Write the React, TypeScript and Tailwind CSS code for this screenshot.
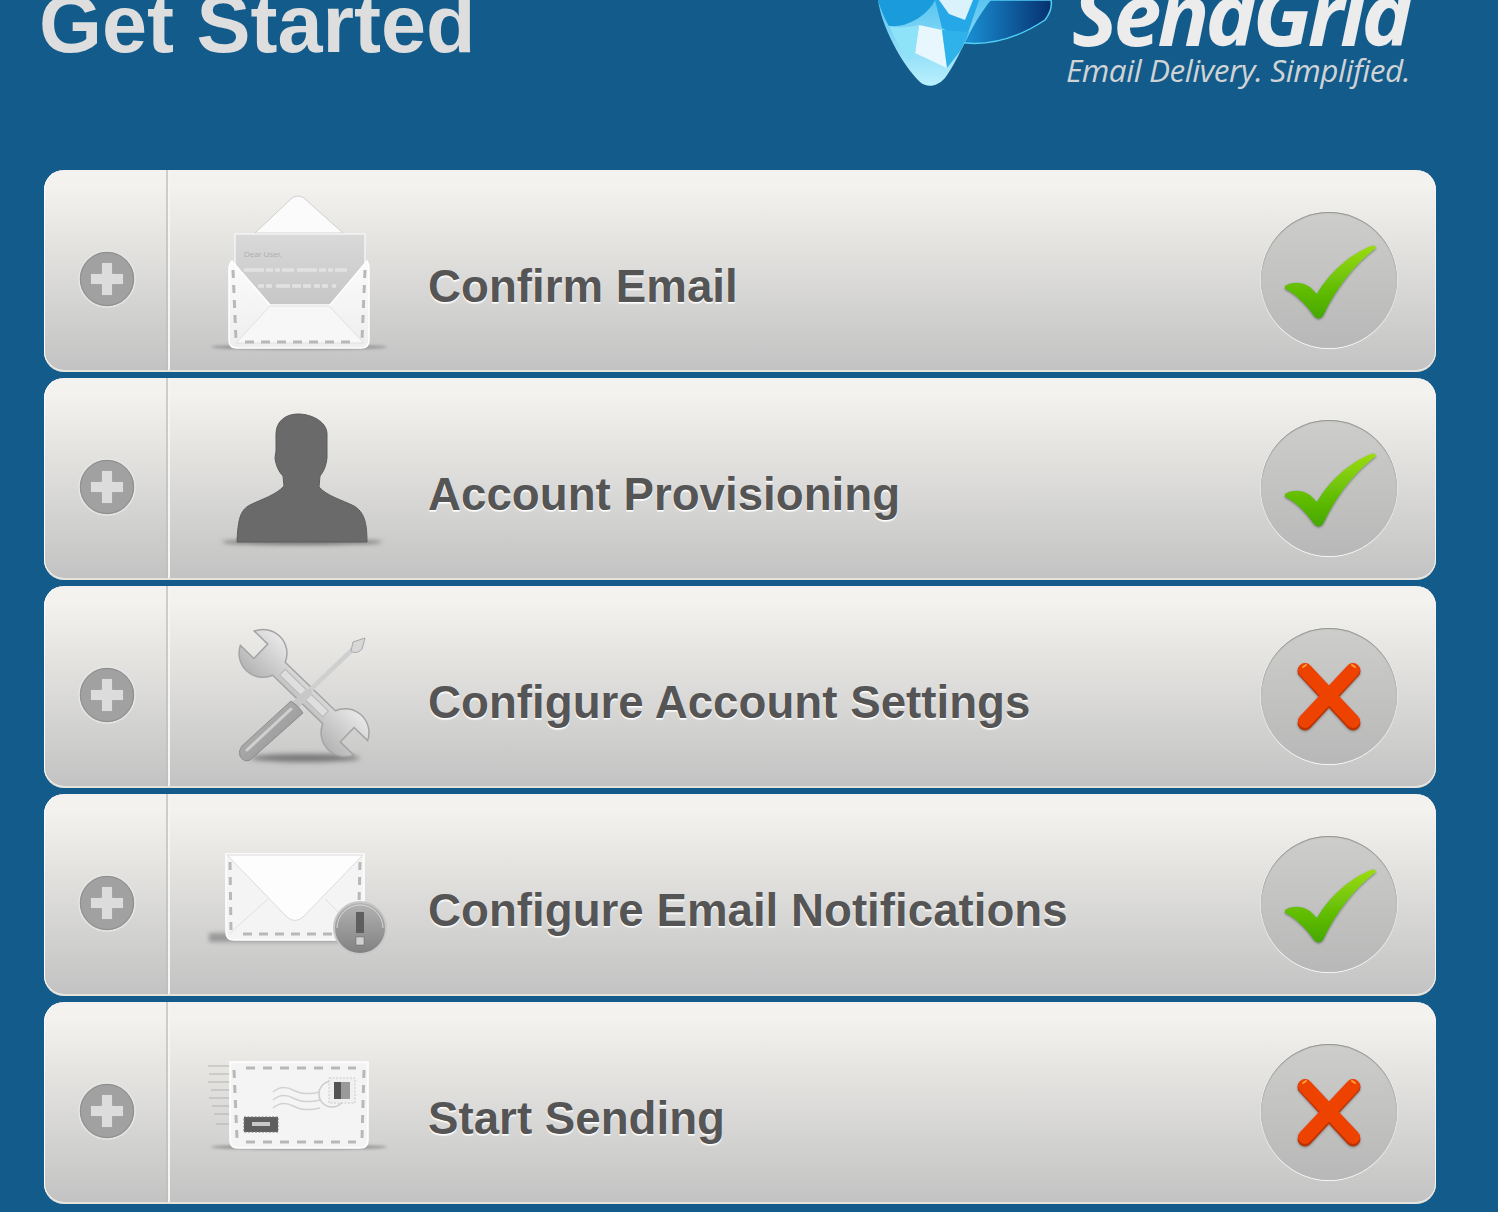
import React from "react";

function Dash({ d }: { d: string }) {
  return <path d={d} fill="none" stroke="#b8b8b8" strokeWidth="3" strokeDasharray="8 7" />;
}

function OpenEnvelope() {
  return (
    <svg viewBox="200 170 200 202" className="w-[200px] h-[202px] shrink-0 ml-[30px]">
      <defs>
        <linearGradient id="a1" x1="0" y1="0" x2="0" y2="1"><stop offset="0" stopColor="#d9d9d9" /><stop offset="1" stopColor="#c6c6c6" /></linearGradient>
        <linearGradient id="a2" x1="0" y1="0" x2="0" y2="1"><stop offset="0" stopColor="#fbfbfb" /><stop offset="1" stopColor="#eeeeee" /></linearGradient>
        <filter id="a3" x="-20%" y="-200%" width="140%" height="500%"><feGaussianBlur stdDeviation="1.5" /></filter>
      </defs>
      <ellipse cx="299" cy="347" rx="88" ry="2.5" fill="#8f8f8f" filter="url(#a3)" />
      <path d="M255 233 L292 198 Q298 194 304 198 L343 233 Z" fill="#fbfbfb" stroke="#d0d0d0" />
      <rect x="235" y="234" width="130" height="72" fill="url(#a1)" stroke="#f4f4f4" strokeWidth="1.5" />
      <text x="244" y="257" fontSize="8" fill="#b0b0b0" fontFamily="'Liberation Sans', sans-serif">Dear User,</text>
      <path d="M244 270 H348" stroke="#e2e2e2" strokeWidth="3.5" strokeDasharray="20 2 7 2 5 2 12 3" />
      <path d="M258 286 H336" stroke="#e2e2e2" strokeWidth="3.5" strokeDasharray="6 2 6 4 14 2 9 2 8 3" />
      <path d="M232 261 L270 305 H330 L367 261 Q369 264 369 268 V340 Q369 348 361 348 H237 Q229 348 229 340 V268 Q229 264 232 261 Z" fill="url(#a2)" stroke="#ffffff" strokeWidth="1.5" />
      <path d="M270 306 H329 L364 343 H236 Z" fill="#f7f7f7" stroke="#e0e0e0" />
      <Dash d="M233 270 L236 340" />
      <Dash d="M365 270 L362 340" />
      <path d="M245 342 L355 342" fill="none" stroke="#b8b8b8" strokeWidth="3" strokeDasharray="9 7" />
    </svg>
  );
}

function Person() {
  return (
    <svg viewBox="200 378 200 202" className="w-[200px] h-[202px] shrink-0 ml-[30px]">
      <defs>
        <filter id="b1" x="-20%" y="-200%" width="140%" height="500%"><feGaussianBlur stdDeviation="2" /></filter>
        <filter id="b2" x="-5%" y="-5%" width="110%" height="110%"><feGaussianBlur stdDeviation="0.5" /></filter>
      </defs>
      <ellipse cx="302" cy="542" rx="80" ry="3" fill="#777" filter="url(#b1)" />
      <path
        d="M298 414 C286 414 276 421 276 434 L276 451 L275 458 C276 466 279 472 283 476 L284 486 C276 495 262 499 250 505 C240 510 238 520 237 542 H367 C367 522 364 512 354 506 C342 500 327 496 319 487 L320 476 C324 471 326 466 327 458 L327 434 C327 422 312 414 298 414 Z"
        fill="#6b6b6b"
        stroke="#5c5c5c"
        filter="url(#b2)"
      />
    </svg>
  );
}

function Tools() {
  return (
    <svg viewBox="200 586 200 202" className="w-[200px] h-[202px] shrink-0 ml-[30px]">
      <defs>
        <linearGradient id="c1" x1="0" y1="0" x2="0" y2="1"><stop offset="0" stopColor="#e8e8e8" /><stop offset="1" stopColor="#b4b4b4" /></linearGradient>
        <linearGradient id="c2" x1="0" y1="0" x2="1" y2="1"><stop offset="0" stopColor="#bdbdbd" /><stop offset="1" stopColor="#8c8c8c" /></linearGradient>
        <filter id="c3" x="-20%" y="-200%" width="140%" height="500%"><feGaussianBlur stdDeviation="2.5" /></filter>
      </defs>
      <ellipse cx="305" cy="758" rx="55" ry="4" fill="#777" filter="url(#c3)" />
      <g transform="translate(304 693) rotate(44)">
        <path
          d="M-34.8 -9 A24 24 0 0 0 -78.8 -10 L-60 -10 L-60 10 L-78.8 10 A24 24 0 0 0 -34.8 9 L34.8 9 A24 24 0 0 0 78.8 10 L60 10 L60 -10 L78.8 -10 A24 24 0 0 0 34.8 -9 Z"
          fill="url(#c1)"
          stroke="#a4a4a4"
          strokeWidth="1.5"
        />
        <rect x="-30" y="-4" width="60" height="8" fill="#dedede" stroke="#b8b8b8" />
      </g>
      <path d="M306 694 L352 650" stroke="#cfcfcf" strokeWidth="4.5" strokeLinecap="round" />
      <path d="M351 651 L353 642 L365 638 L362 649 Q356 655 351 651 Z" fill="#d8d8d8" stroke="#a8a8a8" />
      <path d="M292 708 L308 693" stroke="#c8c8c8" strokeWidth="8" strokeLinecap="round" />
      <path d="M291 701 Q299 706 303 713 L250 760 Q244 763 240 756 Q238 751 242 746 Z" fill="url(#c2)" stroke="#8c8c8c" />
      <path d="M247 750 L291 709" stroke="#d0d0d0" strokeWidth="3" strokeLinecap="round" />
    </svg>
  );
}

function AlertEnvelope() {
  return (
    <svg viewBox="200 794 200 202" className="w-[200px] h-[202px] shrink-0 ml-[30px]">
      <defs>
        <linearGradient id="d1" x1="0" y1="0" x2="0" y2="1"><stop offset="0" stopColor="#b4b4b4" /><stop offset="1" stopColor="#808080" /></linearGradient>
        <filter id="d2" x="-20%" y="-200%" width="140%" height="500%"><feGaussianBlur stdDeviation="2" /></filter>
      </defs>
      <rect x="209" y="933" width="150" height="9" fill="#999" filter="url(#d2)" />
      <path d="M226 854 H364 V932 Q364 940 356 940 H234 Q226 940 226 932 Z" fill="#f4f4f4" stroke="#fff" strokeWidth="1.5" />
      <path d="M229 934 L268 899 M360 934 L325 899" stroke="#e0e0e0" strokeWidth="1" />
      <path d="M227 855 H363 L303 917 Q295 924 287 917 Z" fill="#fdfdfd" stroke="#dadada" />
      <Dash d="M230 862 L231 932" />
      <Dash d="M360 862 L359 905" />
      <path d="M243 934 H340" fill="none" stroke="#b8b8b8" strokeWidth="3" strokeDasharray="9 7" />
      <circle cx="360" cy="928" r="26" fill="url(#d1)" stroke="#c8c8c8" strokeWidth="2" />
      <path d="M337 928 A23 23 0 0 1 383 928" fill="none" stroke="#d8d8d8" strokeWidth="1" />
      <rect x="356" y="912" width="8" height="21" fill="#5f5f5f" />
      <rect x="356" y="937" width="8" height="8" fill="#d0d0d0" stroke="#666" strokeWidth="0.5" />
    </svg>
  );
}

function SendEnvelope() {
  return (
    <svg viewBox="200 1002 200 202" className="w-[200px] h-[202px] shrink-0 ml-[30px]">
      <defs>
        <filter id="e1" x="-20%" y="-200%" width="140%" height="500%"><feGaussianBlur stdDeviation="1.5" /></filter>
      </defs>
      <ellipse cx="299" cy="1147" rx="88" ry="2.5" fill="#8f8f8f" filter="url(#e1)" />
      <path d="M208 1066 H230 M209 1074 H230 M208 1082 H230 M211 1090 H230 M209 1098 H230 M212 1106 H230 M214 1114 H230 M216 1124 H230" stroke="#a8a8a8" strokeOpacity="0.4" strokeWidth="2" />
      <path d="M230 1062 H368 V1140 Q368 1148 360 1148 H238 Q230 1148 230 1140 Z" fill="#f4f4f4" stroke="#fff" strokeWidth="1.5" />
      <path d="M246 1068 H356 M246 1142 H356" fill="none" stroke="#b8b8b8" strokeWidth="3" strokeDasharray="9 8" />
      <Dash d="M234 1070 L237 1138" />
      <Dash d="M364 1070 L362 1138" />
      <path d="M273 1092 Q282 1084 293 1090 T320 1092 M273 1100 Q282 1092 293 1098 T320 1100 M273 1108 Q282 1100 293 1106 T320 1108" fill="none" stroke="#d2d2d2" strokeWidth="1.5" />
      <circle cx="332" cy="1094" r="13" fill="none" stroke="#cccccc" strokeWidth="1.5" />
      <rect x="329" y="1078" width="26" height="25" fill="#f0f0f0" stroke="#c8c8c8" strokeDasharray="2 1.5" />
      <rect x="334" y="1082" width="16" height="17" fill="#9a9a9a" />
      <rect x="334" y="1082" width="7" height="17" fill="#555" />
      <rect x="244" y="1117" width="34" height="15" fill="#5e5e5e" stroke="#777" strokeDasharray="2 1.5" />
      <rect x="252" y="1122" width="18" height="4" fill="#c8c8c8" />
    </svg>
  );
}

function Plus() {
  return (
    <svg viewBox="0 0 58 58" className="w-[58px] h-[58px]">
      <circle cx="29" cy="29" r="28" fill="#a1a1a1" stroke="#e6e6e6" strokeWidth="1.5" />
      <circle cx="29" cy="29" r="26.5" fill="none" stroke="#8f8f8f" strokeWidth="1" />
      <path d="M23.5 12.5 H34.5 V23.5 H45.5 V34.5 H34.5 V45.5 H23.5 V34.5 H12.5 V23.5 H23.5 Z" fill="#dcdcdc" stroke="#8a8a8a" strokeWidth="0.5" strokeLinejoin="round" />
    </svg>
  );
}

function Check() {
  return (
    <svg viewBox="1261 212 136 136" className="w-[136px] h-[136px]">
      <defs>
        <linearGradient id="f1" x1="0" y1="0" x2="0" y2="1"><stop offset="0" stopColor="#9cdc10" /><stop offset="0.6" stopColor="#62bd05" /><stop offset="1" stopColor="#46a800" /></linearGradient>
        <filter id="f2" x="-20%" y="-20%" width="140%" height="140%"><feDropShadow dx="0" dy="1" stdDeviation="1.2" floodColor="#555" floodOpacity="0.7" /></filter>
      </defs>
      <path
        d="M1285 286 C1292 281 1303 282 1310 287 L1317 294 C1326 278 1347 254 1374 245 L1376 248 C1355 264 1337 287 1324 314 C1322 319 1317 320 1314 316 C1305 303 1294 293 1285 289 Z"
        fill="url(#f1)"
        filter="url(#f2)"
      />
    </svg>
  );
}

function Cross() {
  return (
    <svg viewBox="1261 628 136 136" className="w-[136px] h-[136px]">
      <defs>
        <filter id="g2" x="-20%" y="-20%" width="140%" height="140%"><feDropShadow dx="0" dy="1" stdDeviation="0.8" floodColor="#666" floodOpacity="0.7" /></filter>
      </defs>
      <g filter="url(#g2)">
        <path d="M1305 670 L1353 722 M1353 670 L1305 722" stroke="#b93400" strokeWidth="15" strokeLinecap="round" transform="translate(0 1)" />
        <path d="M1305 670 L1353 721 M1353 670 L1305 721" stroke="#ee4200" strokeWidth="14" strokeLinecap="round" />
      </g>
      <path d="M1303 667 L1306 665 M1355 667 L1352 665" stroke="#ffa030" strokeWidth="2" strokeLinecap="round" />
    </svg>
  );
}

function Gem() {
  return (
    <svg viewBox="0 0 176 90" className="w-[176px] h-[90px] shrink-0">
      <defs>
        <linearGradient id="h1" x1="0" y1="0" x2="0" y2="1"><stop offset="0" stopColor="#58c4ef" /><stop offset="1" stopColor="#b9f0fd" /></linearGradient>
        <linearGradient id="h2" x1="0" y1="0" x2="1" y2="0"><stop offset="0" stopColor="#1b9ade" /><stop offset="1" stopColor="#06306f" /></linearGradient>
      </defs>
      <path d="M80 42 C105 46 135 42 168 20 C174 12 175 5 174 0 H100 Z" fill="url(#h2)" stroke="#4fd0f5" strokeWidth="1.5" />
      <path d="M1 0 C4 25 25 65 43 82 C50 88 60 87 68 78 C85 55 90 30 114 0 Z" fill="url(#h1)" />
      <path d="M1 0 C4 10 8 20 12 26 C30 28 50 16 58 0 Z" fill="#1a9bdc" />
      <path d="M58 0 L65 28 L88 42 L102 0 Z" fill="#25a7e8" />
      <path d="M42 25 L38 53 L70 68 L65 30 Z" fill="#e8f7fd" />
      <path d="M62 0 L72 14 L88 20 L96 0 Z" fill="#d9f2fc" />
      <path d="M12 26 C18 38 25 52 32 62 L38 53 L42 25 C30 28 20 28 12 26 Z" fill="#8fe3f8" />
      <path d="M65 30 L70 68 L84 50 L92 32 Z" fill="#2fb1ea" />
    </svg>
  );
}

const rows: { title: string; icon: React.ReactNode; done: boolean }[] = [
  { title: "Confirm Email", icon: <OpenEnvelope />, done: true },
  { title: "Account Provisioning", icon: <Person />, done: true },
  { title: "Configure Account Settings", icon: <Tools />, done: false },
  { title: "Configure Email Notifications", icon: <AlertEnvelope />, done: true },
  { title: "Start Sending", icon: <SendEnvelope />, done: false },
];

export default function App() {
  return (
    <div className="h-[1212px] overflow-hidden bg-[#125b8a] pl-[44px] pr-[62px] font-['Liberation_Sans',sans-serif]">
      <header className="h-[170px] flex items-start justify-between">
        <h1 className="-ml-[5px] -mt-[16px] text-[81px] leading-none font-bold text-[#dedede]">Get Started</h1>
        <div className="flex items-start mr-[10px]">
          <Gem />
          <div className="ml-[13px] w-[360px] -mt-[29px]">
            <div className="text-[86px] leading-[84px] italic font-bold text-[#ececec] font-['Open_Sans',sans-serif] whitespace-nowrap pl-[6px] tracking-[-4px]">
              SendGrid
            </div>
            <div className="text-[31.5px] leading-[34px] -mt-[2px] italic text-[#cfd3d6] font-['Open_Sans',sans-serif] whitespace-nowrap tracking-[-0.45px]">
              Email Delivery. Simplified.
            </div>
          </div>
        </div>
      </header>
      <div className="flex flex-col gap-[6px]">
        {rows.map((r) => (
          <div
            key={r.title}
            className="h-[202px] rounded-[20px] flex items-stretch overflow-hidden border-b-2 border-[#e6e3dc] bg-gradient-to-b from-[#f3f2ee] from-[8%] to-[#c3c3c3] shadow-[inset_1px_0_0_#fff,inset_-1px_0_0_#f4f4f4]"
          >
            <div className="w-[122px] shrink-0 flex items-center justify-center pl-[4px] pt-[17px]">
              <Plus />
            </div>
            <div className="w-[4px] shrink-0 flex">
              <div className="w-[2px] bg-[#bdbdbb]/70" />
              <div className="w-[2px] bg-[#f5f5f3]" />
            </div>
            {r.icon}
            <div className="ml-[28px] pt-[33px] flex items-center text-[45.7px] leading-none font-bold text-[#555555] whitespace-nowrap [text-shadow:0_1px_1px_#ffffff,0_2px_1px_rgba(255,255,255,0.7)]">
              {r.title}
            </div>
            <div className="ml-auto mr-[39px] pt-[20px] flex items-center">
              <div className="w-[136px] h-[136px] rounded-full bg-gradient-to-b from-[#cdcdcb] to-[#b8b8b8] shadow-[inset_0_1px_1px_#8f8f8f,0_1px_0_#f4f4f4,0_0_0_1px_rgba(240,240,240,0.6)]">
                {r.done ? <Check /> : <Cross />}
              </div>
            </div>
          </div>
        ))}
      </div>
    </div>
  );
}
